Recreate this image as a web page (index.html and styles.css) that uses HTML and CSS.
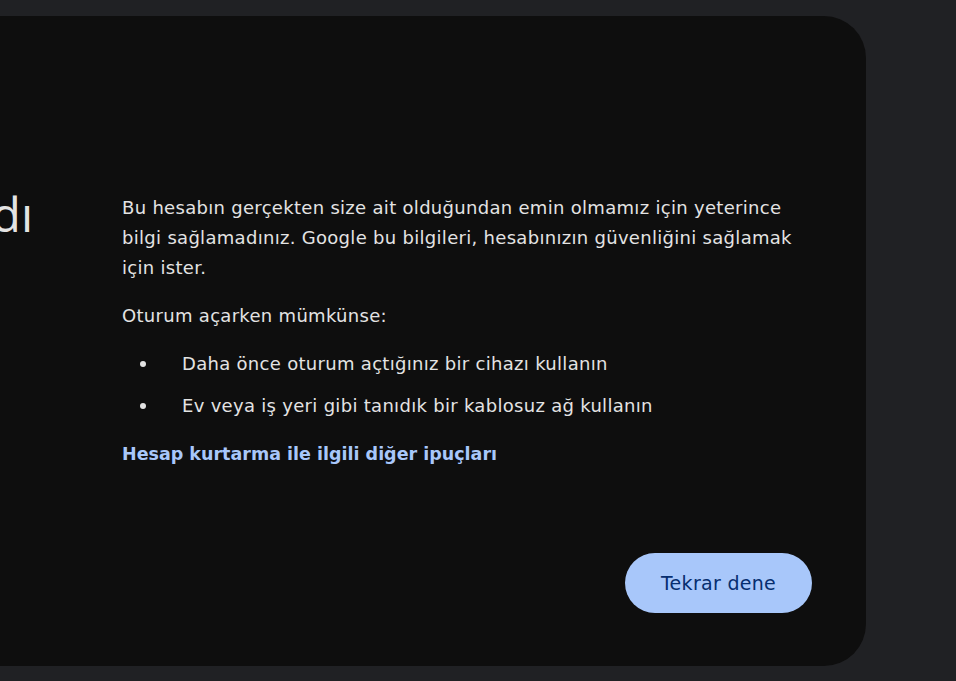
FILE: index.html
```html
<!DOCTYPE html>
<html lang="tr">
<head>
<meta charset="utf-8">
<title>Hesap doğrulanamadı</title>
<link rel="stylesheet" href="styles.css">
</head>
<body>
<main class="card">
  <div class="head">
    <h1 class="title">Hesap doğrulanamadı</h1>
  </div>
  <div class="content">
    <p class="para">Bu hesabın gerçekten size ait olduğundan emin olmamız için yeterince bilgi sağlamadınız. Google bu bilgileri, hesabınızın güvenliğini sağlamak için ister.</p>
    <p class="para">Oturum açarken mümkünse:</p>
    <ul class="tips">
      <li class="tip">Daha önce oturum açtığınız bir cihazı kullanın</li>
      <li class="tip">Ev veya iş yeri gibi tanıdık bir kablosuz ağ kullanın</li>
    </ul>
    <a class="link" href="#">Hesap kurtarma ile ilgili diğer ipuçları</a>
    <div class="actions">
      <button class="btn" type="button">Tekrar dene</button>
    </div>
  </div>
</main>
</body>
</html>
```
FILE: styles.css
```css
html, body {
  margin: 0;
  padding: 0;
  background: #202124;
  height: 100%;
  overflow: hidden;
}
body {
  font-family: "DejaVu Sans", "Open Sans", sans-serif;
  color: #e3e3e3;
  padding-top: 16px;
  box-sizing: border-box;
}
.card {
  width: 866px;
  height: 650px;
  background: #0e0e0e;
  border-radius: 0 42px 42px 0;
  display: flex;
  overflow: hidden;
  box-sizing: border-box;
}
.head {
  flex: 0 0 122px;
  min-width: 0;
  display: flex;
  justify-content: flex-end;
  align-items: flex-start;
  padding-right: 89px;
  box-sizing: border-box;
  padding-top: 170px;
}
.title {
  margin: 0;
  white-space: nowrap;
  font-family: "Open Sans", sans-serif;
  font-size: 48px;
  font-weight: 400;
  line-height: 56px;
  color: #e3e3e3;
  flex-shrink: 0;
}
.content {
  flex: 0 0 690px;
  min-width: 0;
  padding-top: 177px;
  display: flex;
  flex-direction: column;
  font-size: 18px;
  letter-spacing: 0.3px;
  line-height: 30px;
}
.para {
  margin: 0 0 18px;
}
.tips {
  margin: 0 0 18px;
  padding: 0 0 0 60px;
  list-style: none;
}
.tip {
  position: relative;
}
.tip + .tip {
  margin-top: 12px;
}
.tip::before {
  content: "";
  position: absolute;
  left: -42px;
  top: 12px;
  width: 6px;
  height: 6px;
  border-radius: 50%;
  background: #e3e3e3;
}
.link {
  color: #a8c7fa;
  font-size: 17.5px;
  letter-spacing: 0;
  font-weight: 600;
  text-decoration: none;
  align-self: flex-start;
}
.actions {
  display: flex;
  justify-content: flex-end;
  margin-top: 84px;
}
.btn {
  width: 187px;
  height: 60px;
  border: 0;
  border-radius: 30px;
  background: #a8c7fa;
  color: #062e6f;
  font-family: "DejaVu Sans", sans-serif;
  font-size: 19px;
  letter-spacing: 0.3px;
  font-weight: 400;
  cursor: pointer;
}
```
